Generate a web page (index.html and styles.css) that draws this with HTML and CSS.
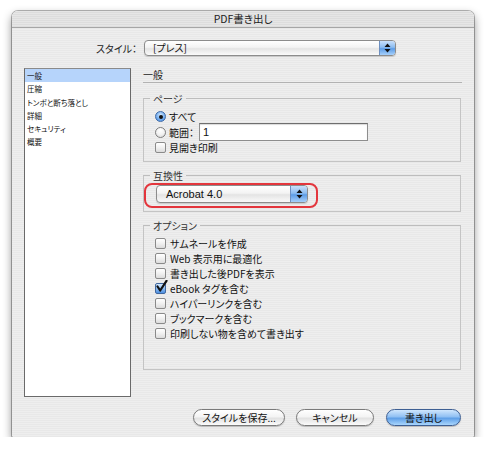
FILE: index.html
```html
<!DOCTYPE html>
<html lang="ja">
<head>
<meta charset="utf-8">
<title>PDF書き出し</title>
<link rel="stylesheet" href="styles.css">
</head>
<body>
<div class="window">
  <div class="titlebar">PDF書き出し</div>
  <div class="content">
    <div class="style-row">
      <span class="style-label">スタイル：</span>
      <div class="popup style-popup">
        <span class="popup-text">[プレス]</span>
        <span class="popup-arrows"><svg width="7" height="10" viewBox="0 0 7 10"><path d="M3.5 0.5 L6.5 4 L0.5 4 Z M3.5 9.5 L6.5 6 L0.5 6 Z" fill="#111"/></svg></span>
      </div>
    </div>
    <div class="main">
      <ul class="list">
        <li class="list-item selected">一般</li>
        <li class="list-item">圧縮</li>
        <li class="list-item">トンボと断ち落とし</li>
        <li class="list-item">詳細</li>
        <li class="list-item">セキュリティ</li>
        <li class="list-item">概要</li>
      </ul>
      <div class="panel">
        <div class="heading">一般</div>
        <fieldset class="group">
          <legend class="legend">ページ</legend>
          <div class="group-body pages">
            <div class="row"><span class="radio on"><span class="dot"></span></span><span>すべて</span></div>
            <div class="row tall"><span class="radio"></span><span>範囲：</span><span class="textfield">1</span></div>
            <div class="row"><span class="check"></span><span>見開き印刷</span></div>
          </div>
        </fieldset>
        <fieldset class="group compat">
          <legend class="legend">互換性</legend>
          <div class="group-body compat-body">
            <div class="popup acrobat-popup">
              <span class="popup-text">Acrobat 4.0</span>
              <span class="popup-arrows"><svg width="7" height="10" viewBox="0 0 7 10"><path d="M3.5 0.5 L6.5 4 L0.5 4 Z M3.5 9.5 L6.5 6 L0.5 6 Z" fill="#111"/></svg></span>
              <span class="highlight"></span>
            </div>
          </div>
        </fieldset>
        <fieldset class="group">
          <legend class="legend">オプション</legend>
          <div class="group-body options">
            <div class="row opt"><span class="check"></span><span>サムネールを作成</span></div>
            <div class="row opt"><span class="check"></span><span>Web 表示用に最適化</span></div>
            <div class="row opt"><span class="check"></span><span>書き出した後PDFを表示</span></div>
            <div class="row opt"><span class="check checked"><svg width="13" height="13" viewBox="0 0 13 13"><path d="M2.5 6.5 L5.2 10.5 L11.5 0.8" fill="none" stroke="#111" stroke-width="2.2" stroke-linecap="round" stroke-linejoin="round"/></svg></span><span>eBook タグを含む</span></div>
            <div class="row opt"><span class="check"></span><span>ハイパーリンクを含む</span></div>
            <div class="row opt"><span class="check"></span><span>ブックマークを含む</span></div>
            <div class="row opt"><span class="check"></span><span>印刷しない物を含めて書き出す</span></div>
          </div>
        </fieldset>
        <div class="buttons">
          <span class="button save">スタイルを保存...</span>
          <span class="button cancel">キャンセル</span>
          <span class="button default">書き出し</span>
        </div>
      </div>
    </div>
  </div>
</div>
</body>
</html>
```
FILE: styles.css
```css
html, body {
  margin: 0;
  padding: 0;
  background: #ffffff;
}
body {
  font-family: "Noto Sans CJK JP", "Liberation Sans", sans-serif;
  color: #111;
  font-feature-settings: "palt";
}
.window {
  margin: 11px 12px 0;
  width: 462px;
  height: 426px;
  display: flex;
  flex-direction: column;
  border-radius: 6px 6px 2px 2px;
  background: repeating-linear-gradient(to bottom, #eeeeee 0 1px, #e8e8e8 1px 2px);
  box-shadow: 0 0 0 1px rgba(0,0,0,0.28), 0 4px 10px rgba(0,0,0,0.45);
  overflow: visible;
}
.titlebar {
  height: 16px;
  line-height: 16px;
  text-align: center;
  font-size: 10.5px;
  color: #222;
  border-radius: 6px 6px 0 0;
  background: repeating-linear-gradient(to bottom, #e6e6e6 0 1px, #dddddd 1px 2px);
  border-bottom: 1px solid #a6a6a6;
}
.content {
  flex: 1;
  padding: 12px 12px 11px 12px;
  display: flex;
  flex-direction: column;
}
.style-row {
  display: flex;
  align-items: center;
  height: 16px;
}
.style-label {
  width: 113px;
  text-align: right;
  font-size: 10px;
  margin-right: 7px;
  color: #222;
}
.popup {
  position: relative;
  display: flex;
  align-items: center;
  box-sizing: border-box;
  border: 1px solid #8c8c8c;
  border-radius: 4px;
  background: linear-gradient(to bottom, #ffffff 0%, #f3f3f3 45%, #e4e4e4 55%, #fafafa 100%);
  box-shadow: 0 1px 1px rgba(0,0,0,0.15);
}
.style-popup {
  width: 252px;
  height: 16px;
}
.popup-text {
  flex: 1;
  font-size: 10px;
  padding-left: 8px;
  line-height: 14px;
}
.popup-arrows {
  width: 15px;
  align-self: stretch;
  display: flex;
  align-items: center;
  justify-content: center;
  border-left: 1px solid #6d8fc0;
  border-radius: 0 3px 3px 0;
  background: linear-gradient(to bottom, #c9e0fb 0%, #8cbcf0 45%, #5d9ce6 55%, #a6d0fb 100%);
}
.acrobat-popup {
  width: 152px;
  height: 18px;
}
.acrobat-popup .popup-text {
  font-family: "Liberation Sans", "Noto Sans CJK JP", sans-serif;
  font-size: 11px;
  padding-left: 9px;
}
.acrobat-popup .popup-arrows {
  width: 16px;
}
.highlight {
  position: absolute;
  left: -13px;
  right: -11px;
  top: -3px;
  bottom: -6px;
  border: 2px solid #e3363d;
  border-radius: 8px;
}
.main {
  display: flex;
  align-items: flex-start;
  gap: 12px;
  margin-top: 12px;
  flex: 1;
}
.list {
  list-style: none;
  margin: 0;
  padding: 0;
  width: 107px;
  height: 329px;
  box-sizing: border-box;
  border: 1px solid #6a6a6a;
  border-top-color: #8a8a8a;
  background: #ffffff;
}
.list-item {
  height: 13.3px;
  line-height: 13px;
  font-size: 7.5px;
  padding-left: 2px;
  color: #111;
}
.list-item.selected {
  background: #b6d4fb;
}
.panel {
  width: 319px;
  display: flex;
  flex-direction: column;
}
.heading {
  height: 14px;
  line-height: 13px;
  font-size: 10px;
  border-bottom: 1px solid #b2b2b2;
  color: #222;
}
.group {
  margin: 9px 1px 0 0;
  padding: 0;
  border: 1px solid #c4c4c4;
  border-top-color: #bdbdbd;
  min-width: 0;
}
.compat, .group + .group {
  margin-top: 7px;
}
.legend {
  margin-left: 6px;
  padding: 0 3px;
  font-size: 10px;
  line-height: 13px;
  color: #333;
}
.group-body {
  padding-left: 11px;
}
.pages {
  padding-top: 5px;
  padding-bottom: 7px;
}
.compat-body {
  padding: 3px 0 8px 12px;
}
.options {
  padding-top: 4px;
  padding-bottom: 28px;
}
.row {
  display: flex;
  align-items: center;
  height: 13px;
  font-size: 10px;
  gap: 3px;
  color: #111;
}
.row.tall {
  height: 18px;
}
.row.opt {
  height: 15px;
}
.radio {
  width: 11px;
  height: 11px;
  box-sizing: border-box;
  border-radius: 50%;
  border: 1px solid #7d7d7d;
  background: radial-gradient(circle at 50% 30%, #ffffff 0%, #f2f2f2 50%, #d6d6d6 100%);
  display: flex;
  align-items: center;
  justify-content: center;
  flex: none;
}
.radio.on {
  border-color: #3f6aa6;
  background: radial-gradient(circle at 50% 35%, #d6ebff 0%, #7fb4f0 50%, #3d84de 100%);
}
.dot {
  width: 4px;
  height: 4px;
  border-radius: 50%;
  background: #111;
}
.textfield {
  margin-left: 2px;
  width: 169px;
  height: 18px;
  box-sizing: border-box;
  border: 1px solid #8e8e8e;
  border-top-color: #6e6e6e;
  background: #ffffff;
  box-shadow: inset 0 1px 1px rgba(0,0,0,0.15);
  font-family: "Liberation Sans", sans-serif;
  font-size: 11px;
  line-height: 16px;
  padding-left: 3px;
}
.check {
  position: relative;
  width: 11px;
  height: 11px;
  box-sizing: border-box;
  border: 1px solid #8a8a8a;
  border-radius: 2px;
  background: linear-gradient(to bottom, #ffffff 0%, #f0f0f0 50%, #dcdcdc 100%);
  flex: none;
}
.check.checked {
  border-color: #40679f;
  background: linear-gradient(to bottom, #d3e8fd 0%, #8fbdf1 50%, #4d8fe0 100%);
}
.check svg {
  position: absolute;
  left: -1px;
  top: -4px;
}
.opt span:last-child {
  margin-left: 1px;
}
.buttons {
  display: flex;
  justify-content: flex-end;
  gap: 11px;
  margin-top: 39px;
  margin-right: 1px;
}
.button {
  height: 17px;
  box-sizing: border-box;
  border: 1px solid #7a7a7a;
  border-radius: 9px;
  font-size: 10px;
  line-height: 15px;
  text-align: center;
  color: #111;
  background: linear-gradient(to bottom, #ffffff 0%, #f4f4f4 45%, #e2e2e2 55%, #fbfbfb 100%);
  box-shadow: 0 1px 1px rgba(0,0,0,0.2);
}
.save { width: 92px; }
.cancel { width: 78px; }
.default {
  width: 75px;
  margin-left: 1px;
  border-color: #3e5f93;
  background: linear-gradient(to bottom, #cfe6fd 0%, #90c0f3 45%, #5f9fe7 55%, #a9d6fd 100%);
}
```
